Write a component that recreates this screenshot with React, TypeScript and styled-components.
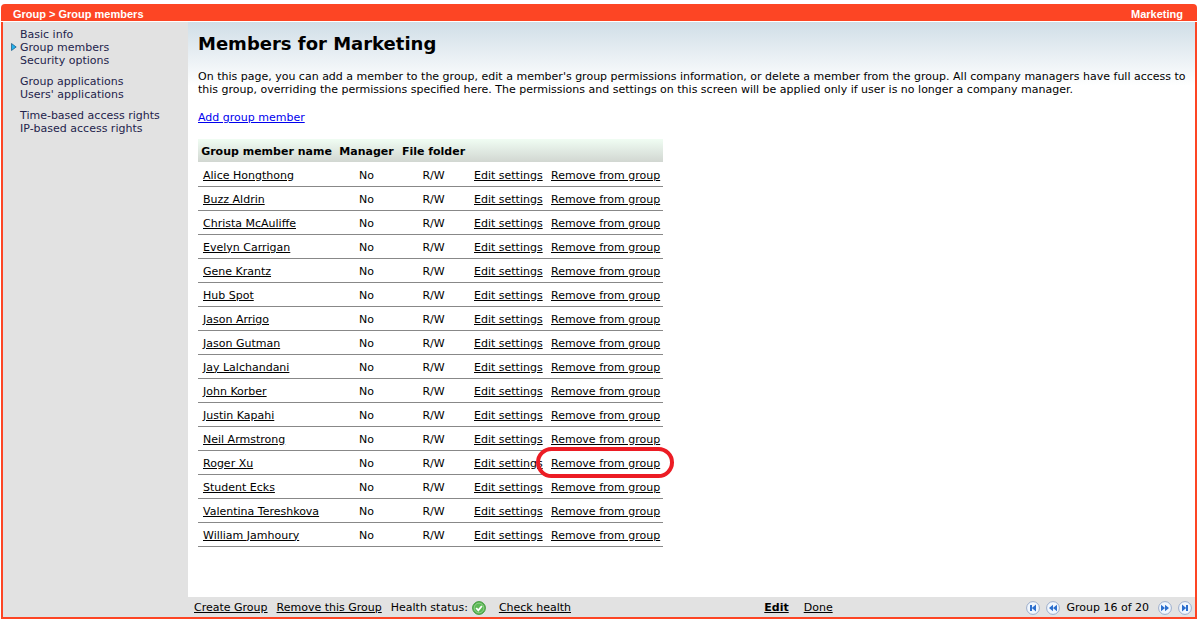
import React from "react";
import styled, { createGlobalStyle } from "styled-components";

const GlobalStyle = createGlobalStyle`
  * { box-sizing: border-box; }
  html, body { margin: 0; background: #fff; }
  body {
    font-family: Verdana, "DejaVu Sans", sans-serif;
    font-size: 11px;
    line-height: 13px;
    color: #000;
  }
`;

const Frame = styled.div`
  display: flex;
  flex-direction: column;
  min-height: 100vh;
  padding: 4px 3px 5px 1px;
`;

const TopBar = styled.header`
  display: flex;
  justify-content: space-between;
  height: 17px;
  padding: 4px 14px 0 12px;
  border-radius: 4px 4px 0 0;
  background: #fd4524;
  color: #fff;
  font-family: Arial, "Liberation Sans", sans-serif;
  font-size: 11px;
  font-weight: bold;
`;

const Shell = styled.div`
  flex: 1;
  display: flex;
  margin-top: 1px;
  border: 2px solid #fd4524;
  border-top: 0;
`;

const Sidebar = styled.nav`
  flex: 0 0 185px;
  padding: 6px 0 0 17px;
  background: #e2e2e2;
`;

const NavGroup = styled.ul`
  list-style: none;
  margin: 0 0 8px;
  padding: 0;
`;

const NavItem = styled.li`
  position: relative;
`;

const NavLink = styled.a`
  color: #24244c;
  text-decoration: none;
`;

const Marker = styled.svg`
  position: absolute;
  left: -9px;
  top: 2px;
`;

const Column = styled.div`
  flex: 1;
  min-width: 0;
  display: flex;
  flex-direction: column;
`;

const Content = styled.main`
  flex: 1;
  padding: 10px 0 10px 10px;
  background: linear-gradient(#d0dee7, #fff 64px) no-repeat;
`;

const Title = styled.h1`
  margin: 0 0 15px;
  font-size: 18px;
  line-height: 23px;
`;

const Intro = styled.p`
  margin: 0 0 15px;
`;

const AddLink = styled.a`
  color: #0000ee;
`;

const MemberTable = styled.table`
  width: 465px;
  margin-top: 15px;
  table-layout: fixed;
  border-collapse: separate;
  border-spacing: 0;
`;

const HeadRow = styled.tr`
  background: linear-gradient(#f0fdf3, #d0d5d0);
`;

const HeadCell = styled.th<{ $width: number }>`
  width: ${(p) => p.$width}px;
  height: 24px;
  padding: 1px 0 0;
  border-bottom: 1px solid #fff;
  white-space: nowrap;
`;

const Cell = styled.td<{ $center?: boolean }>`
  position: relative;
  height: 24px;
  padding: 1px 5px 0;
  border-bottom: 1px solid #888;
  text-align: ${(p) => (p.$center ? "center" : "left")};
  white-space: nowrap;
`;

const TextLink = styled.a<{ $bold?: boolean }>`
  color: #000;
  font-weight: ${(p) => (p.$bold ? "bold" : "normal")};
`;

const Highlight = styled.span`
  position: absolute;
  inset: -4px -11px -4px -10px;
  border: 4px solid #ec1c24;
  border-radius: 16px;
  pointer-events: none;
`;

const Footer = styled.footer`
  display: grid;
  grid-template-columns: 4fr 3fr;
  align-items: center;
  height: 20px;
  padding: 1px 3px 0 6px;
  background: #e2e2e2;
  white-space: nowrap;
`;

const FooterGroup = styled.div<{ $gap: number }>`
  display: flex;
  align-items: center;
  gap: ${(p) => p.$gap}px;
`;

const FooterSide = styled.div`
  display: flex;
  align-items: center;
  justify-content: space-between;
`;

const Health = styled.span`
  display: flex;
  align-items: center;
  gap: 4px;
  margin-right: 4px;
`;

const PageButton = styled.button`
  display: block;
  width: 14px;
  height: 14px;
  padding: 0;
  border: 0;
  background: none;
`;

const Position = styled.span`
  margin: 0 3px 0 0;
`;

const navGroups = [
  ["Basic info", "Group members", "Security options"],
  ["Group applications", "Users' applications"],
  ["Time-based access rights", "IP-based access rights"],
];

const members = [
  "Alice Hongthong",
  "Buzz Aldrin",
  "Christa McAuliffe",
  "Evelyn Carrigan",
  "Gene Krantz",
  "Hub Spot",
  "Jason Arrigo",
  "Jason Gutman",
  "Jay Lalchandani",
  "John Korber",
  "Justin Kapahi",
  "Neil Armstrong",
  "Roger Xu",
  "Student Ecks",
  "Valentina Tereshkova",
  "William Jamhoury",
];

const glyphs = {
  First: "M4 4h2v6H4z M10 3.6v6.8L5.8 7z",
  Previous: "M7 3.8v6.4L3 7z M11 3.8v6.4L7 7z",
  Next: "M3 3.8v6.4L7 7z M7 3.8v6.4L11 7z",
  Last: "M4 3.6v6.8L8.2 7z M8 4h2v6H8z",
};

function Pager({ to }: { to: keyof typeof glyphs }) {
  return (
    <PageButton type="button" aria-label={`${to} group`}>
      <svg width="14" height="14" viewBox="0 0 14 14" display="block">
        <circle cx="7" cy="7" r="6.4" fill="#f1f7fe" stroke="#9aaccb" strokeWidth="1" />
        <path d={glyphs[to]} fill="#2c6fce" />
      </svg>
    </PageButton>
  );
}

function HealthyIcon() {
  return (
    <svg width="14" height="14" viewBox="0 0 14 14" role="img" aria-label="Healthy">
      <circle cx="7" cy="7" r="6.4" fill="#4fae48" stroke="#469d42" strokeWidth="1" />
      <circle cx="7" cy="7" r="4.9" fill="#5cb955" stroke="#9ad494" strokeWidth="0.9" />
      <path d="M4.2 7l2.1 2.3L9.9 5" fill="none" stroke="#fff" strokeWidth="1.8" />
    </svg>
  );
}

export default function App() {
  return (
    <Frame>
      <GlobalStyle />
      <TopBar>
        <span>Group &gt; Group members</span>
        <span>Marketing</span>
      </TopBar>
      <Shell>
        <Sidebar>
          {navGroups.map((group) => (
            <NavGroup key={group[0]}>
              {group.map((label) => (
                <NavItem key={label}>
                  {label === "Group members" && (
                    <Marker width="6" height="8" viewBox="0 0 6 8" aria-hidden="true">
                      <path d="M0.5 0.5L5.2 4L0.5 7.5z" fill="#22b2ee" stroke="#22618c" strokeWidth="0.8" />
                    </Marker>
                  )}
                  <NavLink href="#">{label}</NavLink>
                </NavItem>
              ))}
            </NavGroup>
          ))}
        </Sidebar>
        <Column>
          <Content>
            <Title>Members for Marketing</Title>
            <Intro>
              On this page, you can add a member to the group, edit a member's group permissions
              information, or delete a member from the group. All company managers have full access
              to this group, overriding the permissions specified here. The permissions and settings
              on this screen will be applied only if user is no longer a company manager.
            </Intro>
            <AddLink href="#">Add group member</AddLink>
            <MemberTable>
              <thead>
                <HeadRow>
                  <HeadCell $width={137}>Group member name</HeadCell>
                  <HeadCell $width={63}>Manager</HeadCell>
                  <HeadCell $width={71}>File folder</HeadCell>
                  <HeadCell $width={77} />
                  <HeadCell $width={117} />
                </HeadRow>
              </thead>
              <tbody>
                {members.map((name) => (
                  <tr key={name}>
                    <Cell><TextLink href="#">{name}</TextLink></Cell>
                    <Cell $center>No</Cell>
                    <Cell $center>R/W</Cell>
                    <Cell><TextLink href="#">Edit settings</TextLink></Cell>
                    <Cell>
                      <TextLink href="#">Remove from group</TextLink>
                      {name === "Roger Xu" && <Highlight />}
                    </Cell>
                  </tr>
                ))}
              </tbody>
            </MemberTable>
          </Content>
          <Footer>
            <FooterGroup $gap={9}>
              <TextLink href="#">Create Group</TextLink>
              <TextLink href="#">Remove this Group</TextLink>
              <Health>Health status: <HealthyIcon /></Health>
              <TextLink href="#">Check health</TextLink>
            </FooterGroup>
            <FooterSide>
              <FooterGroup $gap={15}>
                <TextLink href="#" $bold>Edit</TextLink>
                <TextLink href="#">Done</TextLink>
              </FooterGroup>
              <FooterGroup $gap={6}>
                <Pager to="First" />
                <Pager to="Previous" />
                <Position>Group 16 of 20</Position>
                <Pager to="Next" />
                <Pager to="Last" />
              </FooterGroup>
            </FooterSide>
          </Footer>
        </Column>
      </Shell>
    </Frame>
  );
}
